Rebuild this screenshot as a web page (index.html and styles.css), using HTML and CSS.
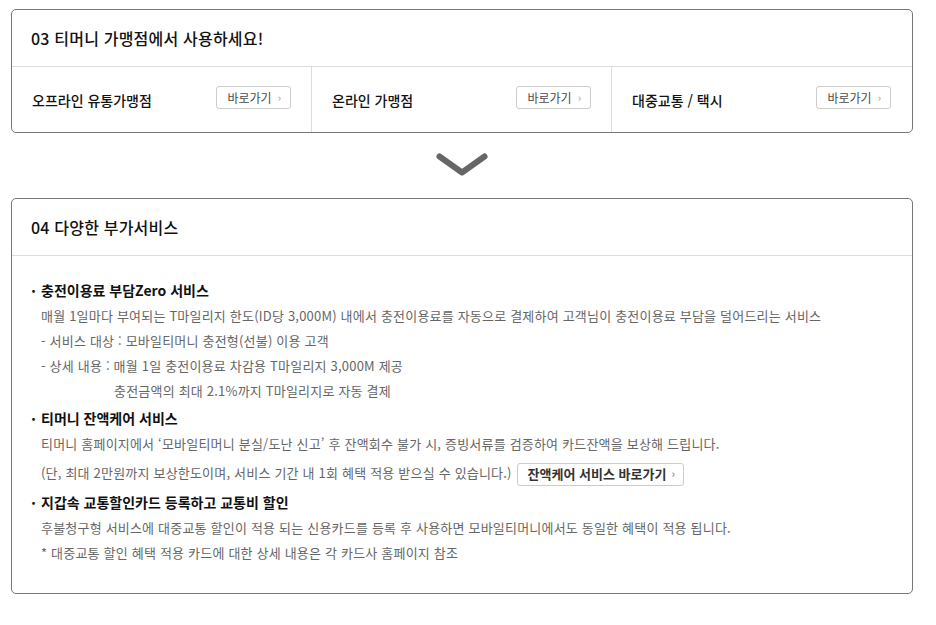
FILE: index.html
```html
<!DOCTYPE html>
<html lang="ko">
<head>
  <meta charset="UTF-8">
  <meta name="viewport" content="width=device-width, initial-scale=1.0">
  <title>모바일티머니 이용안내</title>
  <link rel="stylesheet" href="styles.css">
</head>
<body>
  <div class="wrap">
    <section class="box">
      <h2 class="box-title">03 티머니 가맹점에서 사용하세요!</h2>
      <ul class="shop-list">
        <li class="shop">
          <span class="shop-name">오프라인 유통가맹점</span>
          <a href="#" class="btn-go">바로가기 <span class="arr">›</span></a>
        </li>
        <li class="shop">
          <span class="shop-name">온라인 가맹점</span>
          <a href="#" class="btn-go">바로가기 <span class="arr">›</span></a>
        </li>
        <li class="shop">
          <span class="shop-name">대중교통 / 택시</span>
          <a href="#" class="btn-go">바로가기 <span class="arr">›</span></a>
        </li>
      </ul>
    </section>

    <div class="step-arrow">
      <svg width="52" height="24" viewBox="0 0 52 24">
        <polyline points="3.5,3.5 26,19.5 48.5,3.5" fill="none" stroke="#666" stroke-width="6" stroke-linecap="round" stroke-linejoin="round"/>
      </svg>
    </div>

    <section class="box">
      <h2 class="box-title">04 다양한 부가서비스</h2>
      <div class="svc-body">
        <div class="svc">
          <h3 class="svc-title">충전이용료 부담Zero 서비스</h3>
          <p>매월 1일마다 부여되는 T마일리지 한도(ID당 3,000M) 내에서 충전이용료를 자동으로 결제하여 고객님이 충전이용료 부담을 덜어드리는 서비스</p>
          <p>- 서비스 대상 : 모바일티머니 충전형(선불) 이용 고객</p>
          <p>- 상세 내용 : 매월 1일 충전이용료 차감용 T마일리지 3,000M 제공</p>
          <p class="indent">충전금액의 최대 2.1%까지 T마일리지로 자동 결제</p>
        </div>
        <div class="svc">
          <h3 class="svc-title">티머니 잔액케어 서비스</h3>
          <p>티머니 홈페이지에서 ‘모바일티머니 분실/도난 신고’ 후 잔액회수 불가 시, 증빙서류를 검증하여 카드잔액을 보상해 드립니다.</p>
          <p class="with-btn">(단, 최대 2만원까지 보상한도이며, 서비스 기간 내 1회 혜택 적용 받으실 수 있습니다.) <a href="#" class="btn-go btn-strong">잔액케어 서비스 바로가기 <span class="arr">›</span></a></p>
        </div>
        <div class="svc">
          <h3 class="svc-title">지갑속 교통할인카드 등록하고 교통비 할인</h3>
          <p>후불청구형 서비스에 대중교통 할인이 적용 되는 신용카드를 등록 후 사용하면 모바일티머니에서도 동일한 혜택이 적용 됩니다.</p>
          <p>* 대중교통 할인 혜택 적용 카드에 대한 상세 내용은 각 카드사 홈페이지 참조</p>
        </div>
      </div>
    </section>
  </div>
</body>
</html>
```

FILE: styles.css
```css
body {
  margin: 0;
  background-color: #fff;
  font-family: "Noto Sans CJK KR", "Noto Sans", sans-serif;
  color: #222;
}
.wrap {
  width: 902px;
  padding: 9px 0 0 11px;
}
.box {
  border: 1px solid #777;
  border-radius: 5px;
}
.box-title {
  margin: 0;
  height: 56px;
  padding: 0 19px;
  display: flex;
  align-items: center;
  font-size: 16px;
  font-weight: 500;
  letter-spacing: 0.2px;
  color: #111;
  border-bottom: 1px solid #ddd;
}
.shop-list {
  margin: 0;
  padding: 0;
  list-style: none;
  display: grid;
  grid-template-columns: repeat(3, 1fr);
}
.shop {
  height: 65px;
  display: flex;
  align-items: center;
  justify-content: space-between;
  padding: 0 20px;
  border-right: 1px solid #ddd;
}
.shop:last-child {
  border-right: none;
  padding-right: 21px;
}
.shop-name {
  font-size: 14px;
  font-weight: 500;
  color: #111;
  padding-top: 1px;
}
.btn-go {
  display: inline-flex;
  align-items: center;
  gap: 6px;
  box-sizing: border-box;
  height: 23px;
  margin-top: -4px;
  padding: 0 9px 1px 11px;
  border: 1px solid #ccc;
  border-radius: 3px;
  background-color: #fff;
  font-size: 12px;
  color: #4a4a4a;
  text-decoration: none;
}
.btn-go .arr {
  font-size: 11px;
  color: #999;
}
.step-arrow {
  display: flex;
  justify-content: center;
  padding: 20px 0 21px;
}
.step-arrow svg {
  display: block;
}
.svc-body {
  padding: 22px 19px 28px 18px;
}
.svc + .svc {
  margin-top: 3px;
}
.svc-title {
  margin: 0;
  font-size: 14px;
  font-weight: 700;
  line-height: 25px;
  color: #111;
}
.svc-title::before {
  content: "・";
  display: inline-block;
  width: 11px;
  margin-left: -3px;
  margin-right: 3px;
  font-weight: 400;
  font-size: 13px;
}
.svc p {
  margin: 0;
  padding-left: 11px;
  font-size: 13px;
  letter-spacing: 0.2px;
  line-height: 25px;
  color: #666;
}
.svc p.indent {
  padding-left: 84px;
}
.svc p.with-btn {
  line-height: 29px;
  margin: 2px 0 1px;
}
.btn-strong {
  gap: 5px;
  margin: 0 0 0 1px;
  padding: 0 8px 1px 10px;
  font-size: 13px;
  font-weight: 700;
  letter-spacing: 0;
  color: #333;
  vertical-align: middle;
}
```
